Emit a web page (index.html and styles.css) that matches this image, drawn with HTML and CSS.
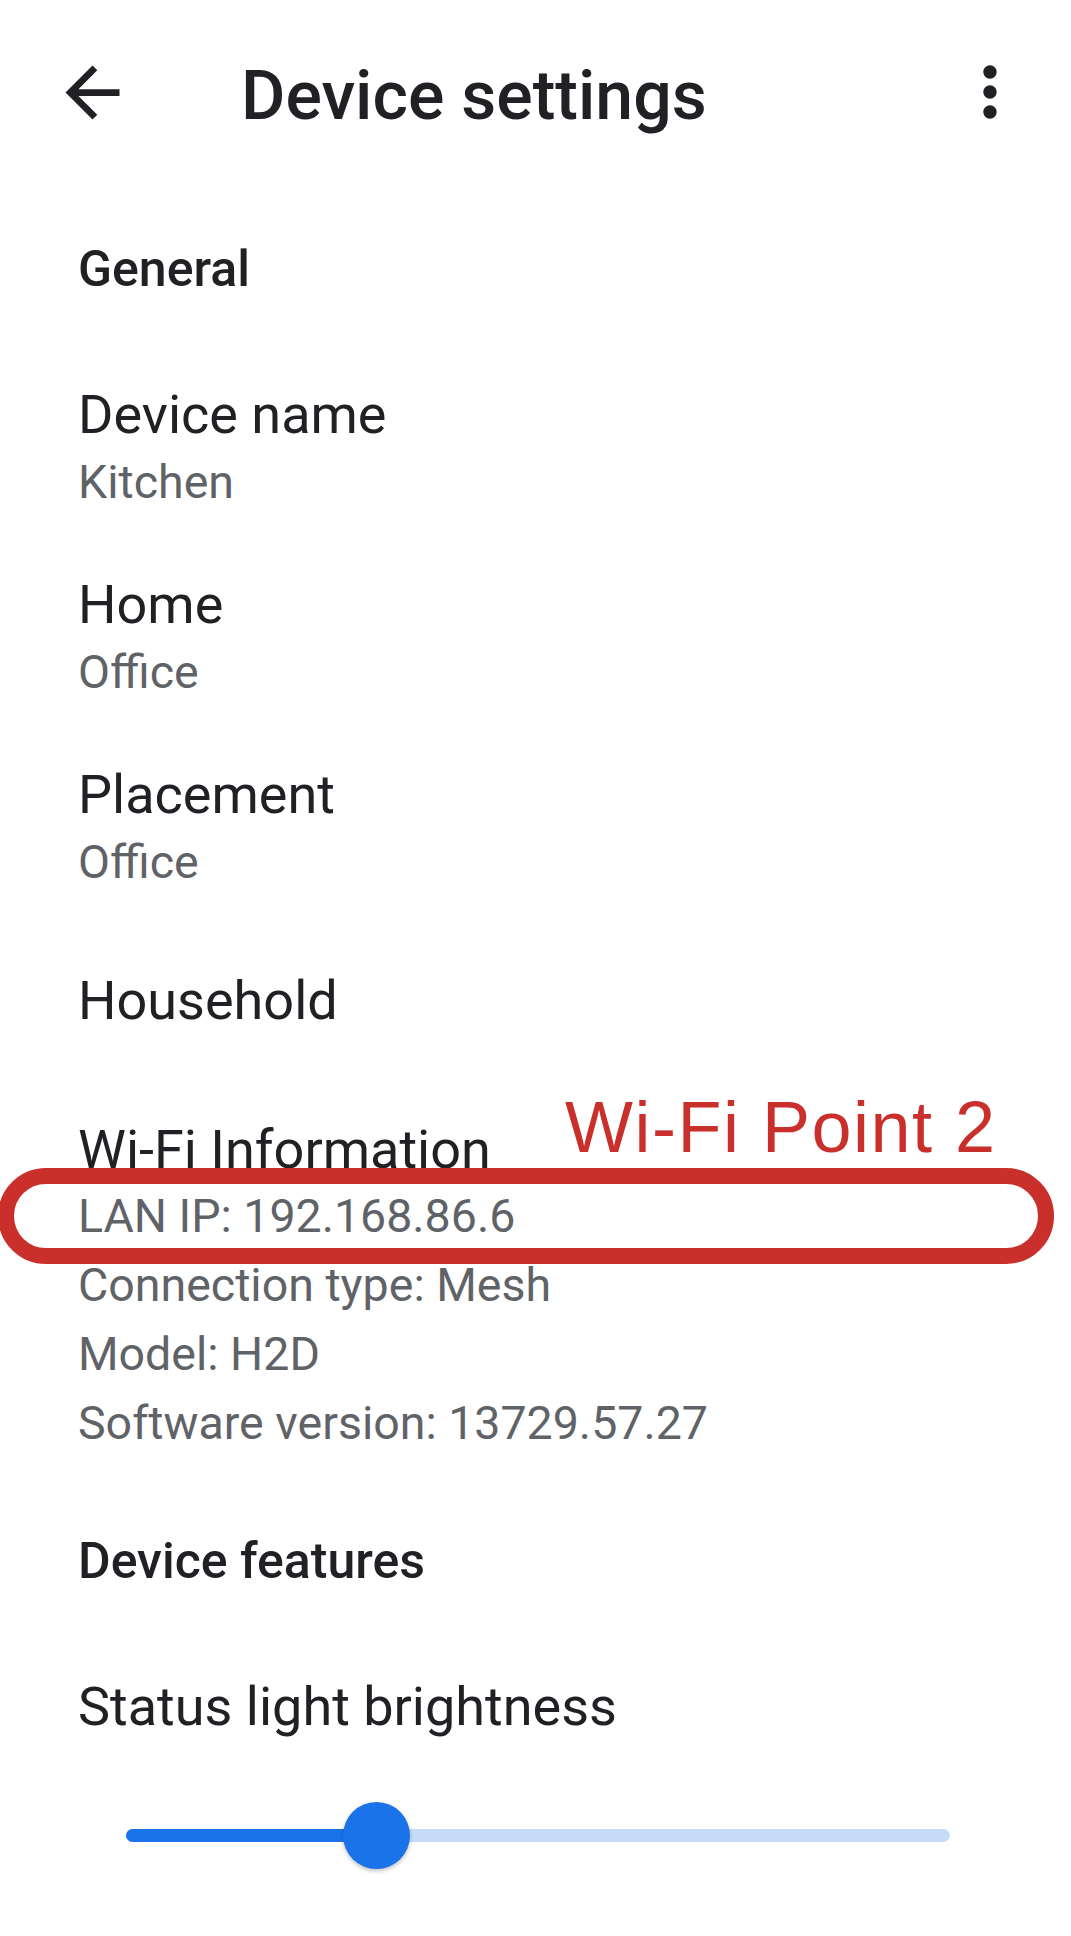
FILE: index.html
```html
<!DOCTYPE html>
<html lang="en">
<head>
<meta charset="utf-8">
<title>Device settings</title>
<link rel="stylesheet" href="styles.css">
</head>
<body>
<header class="appbar">
  <svg class="icon-back" viewBox="0 0 24 24" aria-hidden="true"><path d="M20 11H7.83l5.59-5.590L12 4l-8 8 8 8 1.41-1.41L7.83 13H20v-2z"/></svg>
  <h1 class="appbar-title">Device settings</h1>
  <svg class="icon-more" viewBox="0 0 24 24" aria-hidden="true"><path d="M12 8c1.1 0 2-.9 2-2s-.9-2-2-2-2 .9-2 2 .9 2 2 2zm0 2c-1.1 0-2 .9-2 2s.9 2 2 2 2-.9 2-2-.9-2-2-2zm0 6c-1.1 0-2 .9-2 2s.9 2 2 2 2-.9 2-2-.9-2-2-2z"/></svg>
</header>
<main class="content">
  <h2 class="section section-general">General</h2>
  <div class="item item-first">
    <div class="item-title">Device name</div>
    <div class="item-sub">Kitchen</div>
  </div>
  <div class="item">
    <div class="item-title">Home</div>
    <div class="item-sub">Office</div>
  </div>
  <div class="item">
    <div class="item-title">Placement</div>
    <div class="item-sub">Office</div>
  </div>
  <div class="item item-single">
    <div class="item-title">Household</div>
  </div>
  <div class="item item-wifi">
    <div class="item-title">Wi-Fi Information</div>
    <div class="wifi-lines">
      <div class="wifi-line">LAN IP: 192.168.86.6</div>
      <div class="wifi-line">Connection type: Mesh</div>
      <div class="wifi-line">Model: H2D</div>
      <div class="wifi-line">Software version: 13729.57.27</div>
    </div>
    <div class="annot-oval"></div>
    <div class="annot-label">Wi-Fi Point 2</div>
  </div>
  <h2 class="section section-features">Device features</h2>
  <div class="item item-brightness">
    <div class="item-title">Status light brightness</div>
  </div>
  <div class="slider">
    <div class="slider-track">
      <div class="slider-active" style="width: 30.4%"></div>
      <div class="slider-thumb" style="left: 30.4%"></div>
    </div>
  </div>
</main>
</body>
</html>
```
FILE: styles.css
```css
html, body {
  margin: 0;
  padding: 0;
  background: #ffffff;
}
body {
  width: 1071px;
  min-height: 1936px;
  font-family: Roboto, "Noto Sans", "Liberation Sans", sans-serif;
  color: #202124;
  overflow: hidden;
}
.appbar {
  display: flex;
  align-items: center;
  height: 184px;
  padding: 0 41px 0 52px;
  box-sizing: border-box;
}
.icon-back {
  width: 81px;
  height: 81px;
  fill: #202124;
  flex: none;
}
.icon-more {
  width: 80px;
  height: 80px;
  fill: #202124;
  flex: none;
}
.appbar-title {
  flex: 1;
  margin: 8px 0 0 108px;
  font-size: 68px;
  line-height: 68px;
  font-weight: 500;
  letter-spacing: 0;
}
.content {
  display: flex;
  flex-direction: column;
}
.section {
  margin: 0;
  padding-left: 78px;
  font-size: 50px;
  line-height: 60px;
  font-weight: 500;
}
.section-general {
  margin-top: 55px;
}
.section-features {
  margin-top: 73px;
}
.item {
  padding-left: 78px;
  margin-top: 56px;
}
.item-first {
  margin-top: 84px;
}
.item-single {
  margin-top: 72px;
}
.item-wifi {
  position: relative;
  margin-top: 85px;
}
.item-brightness {
  margin-top: 84px;
}
.item-title {
  font-size: 54px;
  line-height: 64px;
  color: #202124;
}
.item-sub {
  font-size: 46.5px;
  line-height: 70px;
  color: #5f6368;
}
.wifi-lines {
  margin-top: 0;
}
.wifi-line {
  font-size: 46.5px;
  line-height: 69px;
  color: #5f6368;
}
.annot-oval {
  position: absolute;
  left: -2px;
  top: 50px;
  width: 1056px;
  height: 96px;
  box-sizing: border-box;
  border: 16px solid #c9302c;
  border-radius: 48px;
}
.annot-label {
  position: absolute;
  left: 565px;
  top: -27px;
  font-family: "Liberation Sans", Arial, sans-serif;
  font-size: 72px;
  line-height: 72px;
  letter-spacing: 1.5px;
  color: #c9302c;
  white-space: nowrap;
}
.slider {
  margin-top: 62px;
  padding: 0 121px 0 126px;
  height: 68px;
  display: flex;
  align-items: center;
}
.slider-track {
  position: relative;
  flex: 1;
  height: 13px;
  border-radius: 7px;
  background: #c6dbf7;
}
.slider-active {
  height: 100%;
  border-radius: 7px;
  background: #1a73e8;
}
.slider-thumb {
  position: absolute;
  top: 50%;
  width: 67px;
  height: 67px;
  margin: -33.5px 0 0 -33.5px;
  border-radius: 50%;
  background: #1a73e8;
  box-shadow: 0 2px 4px rgba(0, 0, 0, 0.25);
}
```
